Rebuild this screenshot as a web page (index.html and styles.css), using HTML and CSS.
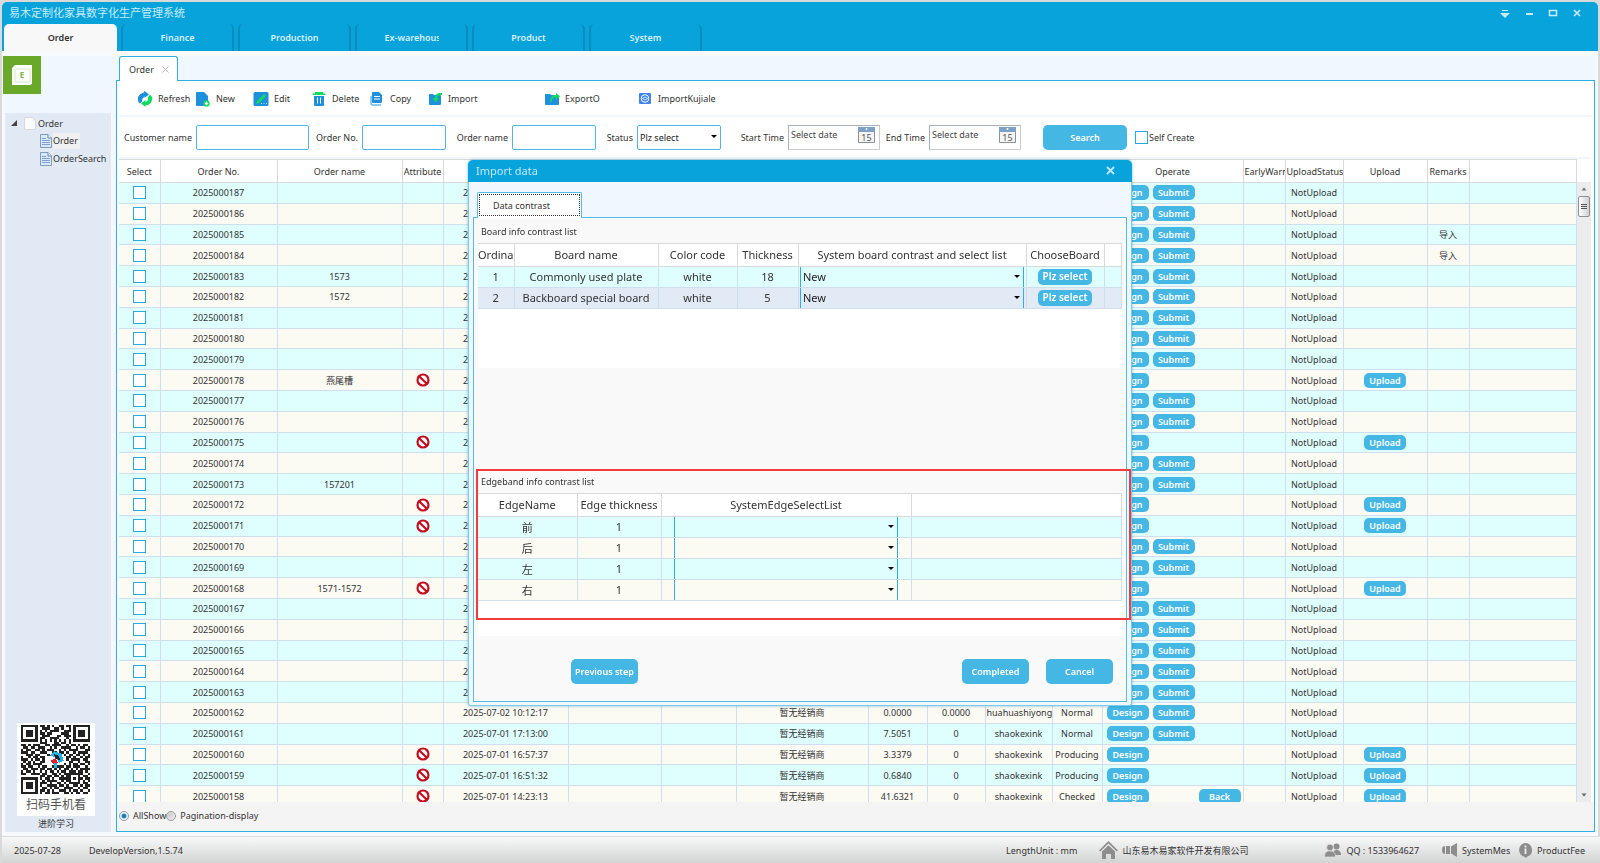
FILE: index.html
```html
<!DOCTYPE html>
<html lang="en">
<head>
  <meta charset="UTF-8" />
  <meta name="viewport" content="width=device-width, initial-scale=1.0"/>
  <title>易木定制化家具数字化生产管理系统</title>
  <link rel="stylesheet" href="styles.css">
</head>
<body>

<div class="app">
  <!-- Title bar -->
  <header class="titlebar">
    <div class="title-row">
      <h1 class="app-title">易木定制化家具数字化生产管理系统</h1>
      <div class="window-buttons">
        <button aria-label="Menu"><svg width="12" height="12" viewBox="0 0 12 12"><path d="M3 2h6v1H3zM1 5h10L6 10z" fill="#c5ecfb"/></svg></button>
        <button aria-label="Minimize"><svg width="12" height="12" viewBox="0 0 12 12"><path d="M3 6h7v2H3z" fill="#c5ecfb"/></svg></button>
        <button aria-label="Maximize"><svg width="12" height="12" viewBox="0 0 12 12"><path d="M2.5 3.5h7v5h-7z" fill="none" stroke="#c5ecfb" stroke-width="1.6"/></svg></button>
        <button aria-label="Close"><svg width="12" height="12" viewBox="0 0 12 12"><path d="M3 3l6 6M9 3l-6 6" stroke="#c5ecfb" stroke-width="1.7"/></svg></button>
      </div>
    </div>
    <nav class="main-nav">
      <a href="#" class="nav-tab active">Order</a>
      <a href="#" class="nav-tab">Finance</a>
      <a href="#" class="nav-tab">Production</a>
      <a href="#" class="nav-tab"><span class="nav-clip">Ex-warehouse</span></a>
      <a href="#" class="nav-tab">Product</a>
      <a href="#" class="nav-tab">System</a>
    </nav>
  </header>

  <div class="body">
    <!-- Sidebar -->
    <aside class="sidebar">
      <div class="module-head">
        <div class="module-icon">
          <svg width="38" height="38" viewBox="0 0 38 38"><path d="M12 9h17v19l-2 1H9V12z" fill="#fff"/><path d="M12 13h15v13H12z" fill="none" stroke="#d4e8bc" stroke-width="1"/></svg>
          <span class="module-letter">E</span>
        </div>
      </div>
      <div class="side-panel">
        <ul class="tree">
          <li class="tree-root">
            <svg class="tree-arrow" width="6" height="6" viewBox="0 0 6 6"><path d="M6 0v6H0z" fill="#444"/></svg>
            <svg width="12" height="13" viewBox="0 0 12 13"><path d="M.5.5h8l3 3v9H.5z" fill="#fbfbfb" stroke="#d5d9de"/><path d="M8.500.5v3h3" fill="#e6e6e6"/></svg>
            <span>Order</span>
          </li>
          <li class="tree-leaf selected"><svg width="12" height="14" viewBox="0 0 12 14"><path d="M.5.500h7.500l3.500 3.500v9.500H.5z" fill="#dbe8f6" stroke="#7d9dbd"/><path d="M8 .5V4h3.500" fill="#fff" stroke="#5e84a8"/><path d="M2 4.500h4M2 6.500h8M2 8.500h8M2 10.500h8" stroke="#7f9fd8"/></svg><a href="#">Order</a></li>
          <li class="tree-leaf"><svg width="12" height="14" viewBox="0 0 12 14"><path d="M.5.500h7.500l3.500 3.500v9.500H.5z" fill="#dbe8f6" stroke="#7d9dbd"/><path d="M8 .5V4h3.500" fill="#fff" stroke="#5e84a8"/><path d="M2 4.500h4M2 6.500h8M2 8.500h8M2 10.500h8" stroke="#7f9fd8"/></svg><a href="#">OrderSearch</a></li>
        </ul>
        <div class="qr-box">
          <svg id="qr" width="69" height="69" viewBox="0 0 29 29" shape-rendering="crispEdges"></svg>
          <p class="qr-text">扫码手机看</p>
        </div>
        <a href="#" class="learn-link">进阶学习</a>
      </div>
    </aside>

    <!-- Main content -->
    <main class="content">
      <div class="page-tabs">
        <div class="page-tab">Order
          <button aria-label="Close tab"><svg width="7" height="7" viewBox="0 0 7 7"><path d="M.5.5l6 6M6.500.5l-6 6" stroke="#b5b5b5"/></svg></button>
        </div>
      </div>

      <div class="panel">
        <div class="toolbar">
          <button class="tool">
            <svg width="16" height="16" viewBox="0 0 16 16"><path d="M8 0v2.500A3 3 0 0 1 8 5L5.500 7.500 5 10l-2 2.500A6 6 0 0 1 5 3z" fill="#1e90dd"/><path d="M7.500 0L12 3.500 7.500 7V5A3.200 3.200 0 0 0 5.200 9.500L3 12.500A6 6 0 0 1 7.500 2z" fill="#1e90dd"/><path d="M13 3.500a6 6 0 0 1-4.500 10.500v2L4 12.500 8.500 9v2A3.200 3.200 0 0 0 10.800 6.500z" fill="#0fdc5d"/></svg>
            <span>Refresh</span></button>
          <button class="tool">
            <svg width="16" height="16" viewBox="0 0 16 16"><path d="M1 2a1 1 0 0 1 1-1h7l4 4v5l-3 1-1 4H2a1 1 0 0 1-1-1z" fill="#1e90dd"/><circle cx="11.500" cy="12.500" r="3.200" fill="#0fdc5d"/><path d="M11.500 10.800v3.400M9.800 12.500h3.400" stroke="#fff" stroke-width="1.300"/></svg>
            <span>New</span></button>
          <button class="tool">
            <svg width="16" height="16" viewBox="0 0 16 16"><rect x=".5" y="1" width="15" height="14" rx="1.500" fill="#1e90dd"/><path d="M3 13l1-3 7-7 2 2-7 7z" fill="#0fdc5d"/><path d="M8 12.500h1M10.500 12.500h1M13 12.500h1" stroke="#b7dcf7"/></svg>
            <span>Edit</span></button>
          <button class="tool">
            <svg width="16" height="16" viewBox="0 0 16 16"><path d="M4 1h8v1.500h2.500V4h-13V2.500H4z" fill="#0fdc5d"/><path d="M3 5h10v9a1 1 0 0 1-1 1H4a1 1 0 0 1-1-1z" fill="#1e90dd"/><path d="M6.500 6.500v6M9.500 6.500v6" stroke="#fff"/></svg>
            <span>Delete</span></button>
          <button class="tool">
            <svg width="16" height="16" viewBox="0 0 16 16"><path d="M4 1h6l3 3v7a1 1 0 0 1-1 1H4a1 1 0 0 1-1-1V2a1 1 0 0 1 1-1z" fill="#1e90dd"/><path d="M2 5v7.500A1.500 1.500 0 0 0 3.500 14H12" fill="none" stroke="#6db9ee" stroke-width="1.500"/><path d="M5 5.500h6M5 8h6" stroke="#fff" stroke-width="1.200"/></svg>
            <span>Copy</span></button>
          <button class="tool tool-import">
            <svg width="16" height="16" viewBox="0 0 16 16"><path d="M2 3h4l1 1h6a1 1 0 0 1 1 1v8a1 1 0 0 1-1 1H3a1 1 0 0 1-1-1z" fill="#1e90dd"/><path d="M15 2c-5-.5-7 1.500-7 5H5.500L9 11.500 12 7h-2c0-2 1.500-3 5-3z" fill="#0fdc5d"/></svg>
            <span>Import</span></button>
          <button class="tool tool-export">
            <svg width="16" height="16" viewBox="0 0 16 16"><path d="M1 3h5l1 1h7a1 1 0 0 1 1 1v8a1 1 0 0 1-1 1H2a1 1 0 0 1-1-1z" fill="#1e90dd"/><path d="M6 11c0-5 2-7 6-7V2l4 3.500-4 3v-2c-3 0-4 1-4.500 4.500z" fill="#0fdc5d"/></svg>
            <span>ExportO</span></button>
          <button class="tool">
            <svg width="16" height="16" viewBox="0 0 16 16"><rect x="2" y="2" width="12" height="11" rx="1" fill="#3f83ee"/><circle cx="8" cy="7.500" r="3.800" fill="none" stroke="#fff"/><path d="M5.500 7.500L8 9l2.500-1.500L8 6z" fill="none" stroke="#fff" stroke-width=".8"/></svg>
            <span>ImportKujiale</span></button>
        </div>

        <form class="search-bar">
          <label class="lb lb-customer" for="customer">Customer name</label>
          <input type="text" id="customer" class="field field-wide" />
          <label class="lb lb-no" for="orderNo">Order No.</label>
          <input type="text" id="orderNo" class="field" />
          <label class="lb lb-name" for="orderName">Order name</label>
          <input type="text" id="orderName" class="field" />
          <label class="lb lb-status" for="status">Status</label>
          <span class="select-wrap">
            <select id="status" class="field"><option>Plz select</option></select>
          </span>
          <label class="lb lb-start" for="startTime">Start Time</label>
          <span class="date-field">
            <input type="text" id="startTime" placeholder="Select date" />
            <button type="button" aria-label="Pick start date"><svg width="17" height="16" viewBox="0 0 17 16"><path d="M.5.500h16v15H.5z" fill="#f5f5f5" stroke="#8b8f96"/><path d="M0 0h17v5H0z" fill="#7da0c4"/><circle cx="8.500" cy="2" r="1" fill="#fff"/></svg><span>15</span></button>
          </span>
          <label class="lb lb-end" for="endTime">End Time</label>
          <span class="date-field">
            <input type="text" id="endTime" placeholder="Select date" />
            <button type="button" aria-label="Pick end date"><svg width="17" height="16" viewBox="0 0 17 16"><path d="M.5.500h16v15H.5z" fill="#f5f5f5" stroke="#8b8f96"/><path d="M0 0h17v5H0z" fill="#7da0c4"/><circle cx="8.500" cy="2" r="1" fill="#fff"/></svg><span>15</span></button>
          </span>
          <button type="button" class="btn btn-search">Search</button>
          <label class="self-create"><input type="checkbox" class="check" /> Self Create</label>
        </form>

        <div class="table-area">
          <div class="table-scroll">
            <table class="grid orders">
              <colgroup>
                <col class="w41"><col class="w117"><col class="w125"><col class="w41"><col class="w125">
                <col class="w93"><col class="w75"><col class="w132"><col class="w59"><col class="w58">
                <col class="w67"><col class="w50"><col class="w141"><col class="w42"><col class="w58">
                <col class="w84"><col class="w42"><col>
              </colgroup>
              <thead>
                <tr>
                  <th>Select</th><th>Order No.</th><th>Order name</th><th>Attribute</th><th>Create time</th>
                  <th></th><th></th><th>Dealer</th><th>Area</th><th>Price</th>
                  <th>User</th><th>State</th><th>Operate</th><th class="tight">EarlyWarning</th><th class="tight">UploadStatus</th>
                  <th>Upload</th><th>Remarks</th><th></th>
                </tr>
              </thead>
              <tbody id="orderRows"></tbody>
            </table>
          </div>
          <div class="scrollbar">
            <svg width="14" height="14" viewBox="0 0 14 14"><path d="M4.500 8.500h5L7 5.500z" fill="#777"/></svg>
            <div class="thumb"></div>
            <svg class="scroll-down" width="14" height="14" viewBox="0 0 14 14"><path d="M4.500 5.500h5L7 8.500z" fill="#666"/></svg>
          </div>
        </div>

        <div class="paging">
          <label><input type="radio" name="paging" class="radio" checked />AllShow</label>
          <label><input type="radio" name="paging" class="radio" />Pagination-display</label>
        </div>
      </div>
    </main>
  </div>

  <!-- Status bar -->
  <footer class="statusbar">
    <span>2025-07-28</span>
    <span class="version">DevelopVersion,1.5.74</span>
    <span class="unit">LengthUnit : mm</span>
    <a href="#" class="foot-link company"><svg width="19" height="18" viewBox="0 0 19 18"><path d="M0 9.500L9.500 0 19 9.500l-1.300 1L9.500 2.500l-8.200 8z" fill="#8d8d8d"/><path d="M3 10.500l6.500-6.300 6.500 6.300V18h-4v-5H7v5H3z" fill="#8d8d8d"/></svg>山东易木易家软件开发有限公司</a>
    <span class="foot-link qq"><svg width="18" height="14" viewBox="0 0 18 14"><circle cx="12.500" cy="3.500" r="3" fill="#8d8d8d"/><path d="M9 12c0-4 1.500-5 3.500-5S17 8 17 12z" fill="#8d8d8d"/><circle cx="6" cy="4.500" r="3.300" fill="#8d8d8d" stroke="#e2e2e2" stroke-width=".7"/><path d="M.5 14c0-4.500 2-6 5.500-6s5.500 1.500 5.500 6z" fill="#8d8d8d" stroke="#e2e2e2" stroke-width=".7"/></svg>QQ : 1533964627</span>
    <a href="#" class="foot-link"><svg width="16" height="14" viewBox="0 0 16 14"><path d="M3 3v8a3 4 0 0 1 0-8zM4 3h4v8H4zM9 3.500L15 0v14l-6-3.500z" fill="#8d8d8d"/></svg><span class="foot-clip">SystemMes</span></a>
    <a href="#" class="foot-link"><svg width="15" height="15" viewBox="0 0 15 15"><path d="M7.500 0a7 7 0 0 1 2 13.500L7.500 15l-1-1.200A7 7 0 0 1 7.500 0z" fill="#8d8d8d"/><path d="M7.500 2.500v2M7.500 5.500v5.500" stroke="#eee" stroke-width="1.800"/></svg>ProductFee</a>
  </footer>
</div>

<!-- Import dialog -->
<div class="overlay">
  <section class="dialog" role="dialog" aria-labelledby="dialogTitle">
    <header class="dialog-head">
      <h2 id="dialogTitle">Import data</h2>
      <button aria-label="Close dialog"><svg width="9" height="9" viewBox="0 0 9 9"><path d="M1 1l7 7M8 1L1 8" stroke="#bfe8f8" stroke-width="1.800"/></svg></button>
    </header>
    <div class="dialog-body">
      <button class="dialog-tab">Data contrast</button>
      <div class="dialog-panel">
        <h3 class="list-title">Board info contrast list</h3>
        <div class="list-box board-box">
          <table class="grid list">
            <colgroup><col class="w36"><col class="w144"><col class="w79"><col class="w61"><col class="w228"><col class="w78"><col></colgroup>
            <thead>
              <tr><th class="tight">Ordinal</th><th>Board name</th><th>Color code</th><th>Thickness</th><th>System board contrast and select list</th><th>ChooseBoard</th><th></th></tr>
            </thead>
            <tbody>
              <tr><td>1</td><td>Commonly used plate</td><td>white</td><td>18</td>
                <td class="cell-select"><span class="select-wrap"><select aria-label="System board 1"><option>New</option></select></span></td>
                <td><button class="btn btn-cell btn-plz">Plz select</button></td><td></td></tr>
              <tr class="picked"><td>2</td><td>Backboard special board</td><td>white</td><td>5</td>
                <td class="cell-select"><span class="select-wrap"><select aria-label="System board 2"><option>New</option></select></span></td>
                <td><button class="btn btn-cell btn-plz">Plz select</button></td><td></td></tr>
            </tbody>
          </table>
        </div>

        <h3 class="list-title">Edgeband info contrast list</h3>
        <div class="list-box edge-box">
          <table class="grid list">
            <colgroup><col class="w99"><col class="w84"><col class="w250"><col></colgroup>
            <thead>
              <tr><th>EdgeName</th><th>Edge thickness</th><th>SystemEdgeSelectList</th><th></th></tr>
            </thead>
            <tbody>
              <tr><td>前</td><td>1</td><td class="cell-select"><span class="select-wrap"><select aria-label="前"><option></option></select></span></td><td></td></tr>
              <tr><td>后</td><td>1</td><td class="cell-select"><span class="select-wrap"><select aria-label="后"><option></option></select></span></td><td></td></tr>
              <tr><td>左</td><td>1</td><td class="cell-select"><span class="select-wrap"><select aria-label="左"><option></option></select></span></td><td></td></tr>
              <tr><td>右</td><td>1</td><td class="cell-select"><span class="select-wrap"><select aria-label="右"><option></option></select></span></td><td></td></tr>
            </tbody>
          </table>
        </div>

        <div class="dialog-actions">
          <button class="btn btn-prev">Previous step</button>
          <button class="btn">Completed</button>
          <button class="btn">Cancel</button>
        </div>
      </div>
    </div>
    <div class="highlight"></div>
  </section>
</div>

<script src="script.js"></script>
</body>
</html>
```
FILE: styles.css
```css
* {
  margin: 0;
  padding: 0;
  box-sizing: border-box;
}

body, html {
  height: 100%;
  overflow: hidden;
}

body, button, input, select {
  font-family: "Noto Sans", "Noto Sans CJK SC", sans-serif;
  font-size: 9px;
  color: #333;
}

body {
  background: #d9d9d9;
}

button {
  border: 0;
  background: none;
  cursor: pointer;
}

a {
  color: inherit;
  text-decoration: none;
}

svg {
  display: block;
  flex: none;
}

.app {
  height: 100vh;
  padding: 2px 2px 0;
  display: flex;
  flex-direction: column;
}

/* Title bar */
.titlebar {
  background: #09a3dc;
  border-radius: 5px 5px 0 0;
  padding: 0 3px 0 2px;
}

.title-row {
  height: 22px;
  display: flex;
  justify-content: space-between;
}

.app-title {
  font-size: 11px;
  font-weight: normal;
  line-height: 22px;
  padding-left: 5px;
  color: #c5ecfb;
}

.window-buttons {
  display: flex;
  gap: 12px;
  padding: 3px 12px 0 0;
  height: 18px;
}

.window-buttons button:first-child {
  padding-top: 3px;
}

.main-nav {
  display: flex;
  gap: 4px;
}

.nav-tab {
  width: 113px;
  height: 27px;
  line-height: 27px;
  text-align: center;
  font-weight: 600;
  color: #d8f1fb;
  border: solid #0b8cbe;
  border-width: 0 2px;
  border-radius: 5px 5px 0 0;
}

.nav-tab.active {
  background: #f8f8f8;
  color: #333;
  border-color: #f8f8f8;
}

.nav-clip {
  display: block;
  width: 54px;
  margin: 0 auto;
  overflow: hidden;
  white-space: nowrap;
}

/* Layout */
.body {
  flex: 1;
  min-height: 0;
  display: flex;
  background: #f8f9fa;
  padding: 5px 3px 4px;
}

.sidebar {
  width: 108px;
  display: flex;
  flex-direction: column;
}

.module-head {
  height: 57px;
  background: #f0f7ff;
}

.module-icon {
  position: relative;
  width: 38px;
  margin-left: -2px;
  background: #6aa829;
}

.module-letter {
  position: absolute;
  inset: 0;
  line-height: 37px;
  text-align: center;
  font-size: 8px;
  font-weight: bold;
  color: #7ab53c;
}

.side-panel {
  flex: 1;
  margin-right: 2px;
  padding-right: 4px;
  background: #e1e9f4;
  display: flex;
  flex-direction: column;
  align-items: center;
}

.tree {
  list-style: none;
  align-self: stretch;
  flex: 1;
  padding-top: 1px;
  white-space: nowrap;
}

.tree li {
  display: flex;
  align-items: center;
  height: 18px;
}

.tree-root {
  padding-left: 6px;
  gap: 2px;
}

.tree-arrow {
  margin-right: 5px;
}

.tree-leaf {
  padding-left: 35px;
  gap: 1px;
}

.tree-leaf a {
  line-height: 16px;
  padding-right: 2px;
}

.selected a {
  background: #f0f0f0;
}

.qr-box {
  width: 78px;
  padding: 2px 4px 0;
  background: #fff;
}

.qr-text {
  font-size: 12px;
  line-height: 22px;
  text-align: center;
  color: #555;
}

.learn-link {
  line-height: 16px;
}

.content {
  flex: 1;
  min-width: 0;
  padding-left: 3px;
  display: flex;
  flex-direction: column;
  background: #f0f7ff;
}

.page-tabs {
  display: flex;
  padding-left: 3px;
}

.page-tab {
  width: 59px;
  height: 25px;
  padding: 0 8px 0 9px;
  display: flex;
  align-items: center;
  justify-content: space-between;
  background: #fff;
  border: 1px solid #2db0e3;
  border-bottom: 0;
  border-radius: 3px 3px 0 0;
  margin-bottom: -1px;
  position: relative;
}

.panel {
  flex: 1;
  min-height: 0;
  display: flex;
  flex-direction: column;
  background: #fff;
  border: 1px solid #2db0e3;
  padding: 0 3px 0 2px;
}

.toolbar {
  display: flex;
  height: 36px;
  padding: 1px 0 0 18px;
  border-bottom: 2px solid #f0f7ff;
}

.tool {
  width: 58px;
  display: flex;
  align-items: center;
  gap: 5px;
}

.tool-import {
  width: 117px;
}

.tool-export {
  width: 93px;
}

/* Search bar */
.search-bar {
  display: flex;
  align-items: center;
  height: 42px;
  border-bottom: 2px solid #f0f7ff;
}

.lb {
  text-align: right;
  padding-right: 4px;
  white-space: nowrap;
}

.lb-customer { width: 77px; }
.lb-no { width: 53px; }
.lb-name { width: 66px; }
.lb-status { width: 41px; }
.lb-start { width: 67px; }
.lb-end { width: 49px; }

.field {
  width: 84px;
  height: 25px;
  background: #fff;
  border: 1px solid #4bb9e2;
  border-radius: 2px;
  padding: 0 2px;
}

.field-wide {
  width: 113px;
}

select {
  appearance: none;
  color: #222;
}

.select-wrap {
  position: relative;
  display: inline-block;
}

.select-wrap::after {
  content: '';
  position: absolute;
  right: 4px;
  top: 50%;
  margin-top: -2px;
  border: 3px solid transparent;
  border-top: 3px solid #000;
  border-bottom: 0;
  pointer-events: none;
}

.date-field {
  display: flex;
  width: 92px;
  height: 25px;
  border: 1px solid #a9b1bb;
  border-right-color: #ccc;
  border-bottom-color: #ccc;
}

.date-field input {
  flex: 1;
  min-width: 0;
  border: 0;
  padding: 0 0 5px 2px;
}

.date-field input::placeholder {
  color: #444;
}

.date-field button {
  position: relative;
  width: 17px;
  height: 16px;
  margin: 1px 4px 0 0;
}

.date-field button span {
  position: absolute;
  inset: 5px 0 0;
  line-height: 11px;
  text-align: center;
  color: #555;
}

.btn {
  width: 67px;
  height: 25px;
  background: #45b7e4;
  border-radius: 5px;
  color: #fff;
  font-weight: 600;
  white-space: nowrap;
}

.btn-search {
  width: 84px;
  margin-left: 22px;
}

.self-create {
  display: flex;
  align-items: center;
  gap: 1px;
  margin-left: 8px;
}

.check {
  appearance: none;
  width: 13px;
  height: 13px;
  border: 1px solid #2ba9dd;
  background: #fff;
}

/* Tables */
.grid {
  width: 100%;
  table-layout: fixed;
  border-collapse: collapse;
}

.grid th, .grid td {
  text-align: center;
  font-weight: normal;
  white-space: nowrap;
  overflow: hidden;
}

.grid th {
  height: 23px;
  background: #fff;
  border: 1px solid #d9d9d9;
  border-left: 0;
}

.grid td {
  height: 20px;
  border: 1px solid #cfdff0;
  border-left: 0;
}

.grid tbody tr {
  background: #fbfaf3;
}

.grid tbody tr:nth-child(odd) {
  background: #dfffff;
}

.grid .tight {
  text-align: left;
}

.w36 { width: 36px; }
.w41 { width: 41px; }
.w42 { width: 42px; }
.w50 { width: 50px; }
.w58 { width: 58px; }
.w59 { width: 59px; }
.w61 { width: 61px; }
.w67 { width: 67px; }
.w75 { width: 75px; }
.w78 { width: 78px; }
.w79 { width: 79px; }
.w84 { width: 84px; }
.w93 { width: 93px; }
.w99 { width: 99px; }
.w117 { width: 117px; }
.w125 { width: 125px; }
.w132 { width: 132px; }
.w141 { width: 141px; }
.w144 { width: 144px; }
.w228 { width: 228px; }
.w250 { width: 250px; }

.table-area {
  flex: 1;
  min-height: 0;
  display: flex;
}

.table-scroll {
  flex: 1;
  min-width: 0;
  overflow: hidden;
}

.orders {
  height: 648px;
}

.orders .check {
  display: block;
  margin: 0 auto;
}

.orders .tight {
  padding-left: 1px;
}

.ban {
  margin: 0 auto;
}

.ops {
  display: grid;
  grid-template-columns: repeat(3, 42px);
  gap: 4px;
  padding-left: 4px;
}

.btn-cell {
  width: 42px;
  height: 15px;
  line-height: 15px;
}

.ops .btn-back {
  grid-column: 3;
}

.scrollbar {
  width: 14px;
  margin-top: 23px;
  background: #ececec;
  display: flex;
  flex-direction: column;
}

.thumb {
  width: 12px;
  height: 21px;
  margin: 0 1px;
  border: 1px solid #8f8f8f;
  border-radius: 2px;
  background: linear-gradient(#555, #555) center 7px / 6px 1px no-repeat,
    linear-gradient(#555, #555) center 9px / 6px 1px no-repeat,
    linear-gradient(#555, #555) center 11px / 6px 1px no-repeat,
    linear-gradient(90deg, #fff, #cfcfd4);
}

.scroll-down {
  margin-top: auto;
}

.paging {
  height: 29px;
  margin: 0 -3px 0 -2px;
  padding-bottom: 2px;
  background: #f4f4f4;
  display: flex;
}

.paging label {
  display: flex;
  align-items: center;
  gap: 4px;
  padding-left: 2px;
}

.paging label + label {
  padding-left: 0;
}

.radio {
  appearance: none;
  width: 10px;
  height: 10px;
  border: 1px solid #999;
  border-radius: 50%;
  background: radial-gradient(circle at 35% 35%, #ccc, #f6f6f6);
}

.radio:checked {
  background: radial-gradient(circle, #1b7fb5 0 35%, #e8f2f8 50%);
}

/* Status bar */
.statusbar {
  height: 27px;
  display: flex;
  align-items: center;
  margin-right: -2px;
  padding: 0 15px 0 12px;
  border-top: 1px solid #dcdcdc;
  background: linear-gradient(#f8f8f8, #d2d4d3);
}

.version {
  margin-left: 28px;
}

.unit {
  margin-left: auto;
}

.foot-link {
  display: flex;
  align-items: center;
  gap: 4px;
}

.company {
  margin: 0 76px 0 22px;
}

.qq {
  margin-right: 23px;
}

.foot-clip {
  width: 56px;
}

/* Import dialog */
.overlay {
  position: fixed;
  inset: 0;
  padding-top: 2px;
  display: flex;
  align-items: center;
  justify-content: center;
}

.dialog {
  position: relative;
  width: 664px;
  background: #f0f7ff;
  border: 1px solid #7ccbea;
  border-top: 0;
  border-radius: 5px 5px 3px 3px;
  box-shadow: 0 0 3px rgba(0, 120, 170, 0.5);
}

.dialog-head {
  height: 22px;
  margin: 0 -1px;
  padding: 0 17px 0 8px;
  display: flex;
  align-items: center;
  justify-content: space-between;
  background: #09a3dc;
  border-radius: 5px 5px 0 0;
}

.dialog-head h2 {
  font-size: 11px;
  font-weight: normal;
  color: #bfe8f8;
}

.dialog-body {
  padding: 10px 4px 3px;
}

.dialog-tab {
  display: block;
  position: relative;
  width: 105px;
  height: 26px;
  margin: 0 0 -1px 4px;
  padding-right: 16px;
  background: #fff;
  border: 1px solid #52bce4;
  border-bottom: 0;
  border-radius: 2px 2px 0 0;
  outline: 1px dotted #333;
  outline-offset: -3px;
}

.dialog-panel {
  padding: 0 4px;
  background: #f9f9f9;
  border: 1px solid #52bce4;
}

.list-title {
  font-size: 9px;
  font-weight: normal;
  line-height: 23px;
  padding: 2px 0 0 3px;
}

.list-box {
  background: #fff;
}

.board-box {
  height: 125px;
  margin-bottom: 100px;
}

.edge-box {
  height: 143px;
}

.list th, .list td, .list select {
  font-size: 11px;
}

.list .picked:nth-child(even) {
  background: #e1eaf5;
}

.cell-select .select-wrap {
  display: block;
  width: 224px;
  margin: 0 auto;
}

.cell-select select {
  display: block;
  width: 100%;
  height: 20px;
  padding-left: 2px;
  background: transparent;
  border: solid #2db0e3;
  border-width: 0 1px;
}

.btn-plz {
  width: 54px;
  height: 16px;
  font-size: 10px;
}

.dialog-actions {
  display: flex;
  gap: 17px;
  padding: 23px 9px 17px 93px;
}

.btn-prev {
  margin-right: auto;
}

/* Red frame round the edgeband list */
.highlight {
  position: absolute;
  top: 309px;
  left: 7px;
  right: 0;
  height: 151px;
  border: 2px solid #f53a3c;
  pointer-events: none;
}
```
FILE: script.js
```js
// [order no, order name, create time, area, price, user, state, buttons, remark]
const DEALER = '暂无经销商';
const orders = [
  ['2025000187', '', '2025-07-25 15:20:11', '0.0000', '0', 'shaokexink', 'Normal', 'S', ''],
  ['2025000186', '', '2025-07-25 14:02:37', '0.0000', '0', 'shaokexink', 'Normal', 'S', ''],
  ['2025000185', '', '2025-07-24 16:41:05', '0.0000', '0', 'shaokexink', 'Normal', 'S', '导入'],
  ['2025000184', '', '2025-07-24 16:38:52', '0.0000', '0', 'shaokexink', 'Normal', 'S', '导入'],
  ['2025000183', '1573', '2025-07-23 10:15:44', '0.0000', '0', 'shaokexink', 'Normal', 'S', ''],
  ['2025000182', '1572', '2025-07-23 09:50:18', '0.0000', '0', 'shaokexink', 'Normal', 'S', ''],
  ['2025000181', '', '2025-07-22 17:22:09', '0.0000', '0', 'shaokexink', 'Normal', 'S', ''],
  ['2025000180', '', '2025-07-22 11:08:30', '0.0000', '0', 'shaokexink', 'Normal', 'S', ''],
  ['2025000179', '', '2025-07-21 15:47:21', '0.0000', '0', 'shaokexink', 'Normal', 'S', ''],
  ['2025000178', '燕尾槽', '2025-07-18 14:33:56', '0.0000', '0', 'shaokexink', 'Producing', 'U', ''],
  ['2025000177', '', '2025-07-17 16:12:40', '0.0000', '0', 'shaokexink', 'Normal', 'S', ''],
  ['2025000176', '', '2025-07-17 10:05:13', '0.0000', '0', 'shaokexink', 'Normal', 'S', ''],
  ['2025000175', '', '2025-07-16 15:29:48', '0.0000', '0', 'shaokexink', 'Producing', 'U', ''],
  ['2025000174', '', '2025-07-15 13:54:02', '0.0000', '0', 'shaokexink', 'Normal', 'S', ''],
  ['2025000173', '157201', '2025-07-14 17:10:35', '0.0000', '0', 'shaokexink', 'Normal', 'S', ''],
  ['2025000172', '', '2025-07-12 11:36:27', '0.0000', '0', 'shaokexink', 'Producing', 'U', ''],
  ['2025000171', '', '2025-07-11 16:45:59', '0.0000', '0', 'shaokexink', 'Producing', 'U', ''],
  ['2025000170', '', '2025-07-10 14:21:06', '0.0000', '0', 'shaokexink', 'Normal', 'S', ''],
  ['2025000169', '', '2025-07-09 10:48:53', '0.0000', '0', 'shaokexink', 'Normal', 'S', ''],
  ['2025000168', '1571-1572', '2025-07-08 15:03:17', '0.0000', '0', 'shaokexink', 'Producing', 'U', ''],
  ['2025000167', '', '2025-07-07 17:31:42', '0.0000', '0', 'shaokexink', 'Normal', 'S', ''],
  ['2025000166', '', '2025-07-05 13:26:34', '0.0000', '0', 'shaokexink', 'Normal', 'S', ''],
  ['2025000165', '', '2025-07-04 16:57:20', '0.0000', '0', 'shaokexink', 'Normal', 'S', ''],
  ['2025000164', '', '2025-07-03 14:40:08', '0.0000', '0', 'shaokexink', 'Normal', 'S', ''],
  ['2025000163', '', '2025-07-02 15:18:45', '0.0000', '0', 'shaokexink', 'Normal', 'S', ''],
  ['2025000162', '', '2025-07-02 10:12:17', '0.0000', '0.0000', 'huahuashiyong', 'Normal', 'S', ''],
  ['2025000161', '', '2025-07-01 17:13:00', '7.5051', '0', 'shaokexink', 'Normal', 'S', ''],
  ['2025000160', '', '2025-07-01 16:57:37', '3.3379', '0', 'shaokexink', 'Producing', 'U', ''],
  ['2025000159', '', '2025-07-01 16:51:32', '0.6840', '0', 'shaokexink', 'Producing', 'U', ''],
  ['2025000158', '', '2025-07-01 14:23:13', '41.6321', '0', 'shaokexink', 'Checked', 'UB', '']
];

const banIcon = '<svg class="ban" width="14" height="14" viewBox="0 0 14 14"><circle cx="7" cy="7" r="5.500" fill="#fff" stroke="#c40d1e" stroke-width="2.200"/><path d="M3.200 3.200l7.600 7.600" stroke="#c40d1e" stroke-width="2.200"/></svg>';

function cellButton(text, extra) {
  return `<button class="btn btn-cell ${extra || ''}">${text}</button>`;
}

document.getElementById('orderRows').innerHTML = orders.map(o => {
  const [no, name, time, area, price, user, state, flags, remark] = o;
  const locked = flags.includes('U');
  let ops = cellButton('Design');
  if (flags.includes('S')) ops += cellButton('Submit');
  if (flags.includes('B')) ops += cellButton('Back', 'btn-back');
  return `<tr>
    <td><input type="checkbox" class="check" aria-label="${no}"></td>
    <td>${no}</td><td>${name}</td><td>${locked ? banIcon : ''}</td><td>${time}</td>
    <td></td><td></td><td>${DEALER}</td><td>${area}</td><td>${price}</td>
    <td class="${user.length > 11 ? 'tight' : ''}">${user}</td><td>${state}</td>
    <td><div class="ops">${ops}</div></td><td></td><td>NotUpload</td>
    <td>${locked ? cellButton('Upload') : ''}</td><td>${remark}</td><td></td>
  </tr>`;
}).join('');

// QR code, one string per module row
const qrRows = [
  '11111110110101001101101111111',
  '10000010011100110100101000001',
  '10111010101011110011101011101',
  '10111010110110000111001011101',
  '10111010011100011011101011101',
  '10000010110011110001001000001',
  '11111110101010101010101111111',
  '00000000111000110110100000000',
  '11010111001101111001011010110',
  '01101101110010100111100101101',
  '10110011010111001010111100011',
  '11101100111001101101001011110',
  '00111011000100000010110110101',
  '10010110110000000001101001011',
  '11101011010000000001011110110',
  '01010100110000000000110010011',
  '10110111100000000010101101101',
  '11011001011001011101101110010',
  '01101110110110101011010101111',
  '10110100101011010110111011010',
  '11001111011001101011111111001',
  '00000000110110110101100010110',
  '11111110101101001111101011011',
  '10000010010111100101100010101',
  '10111010111010011010111110110',
  '10111010100111101101001101011',
  '10111010011010110011110010110',
  '10000010110101001110101101001',
  '11111110101101110011010110110'
];
let d = '';
qrRows.forEach((row, y) => {
  [...row].forEach((bit, x) => {
    if (bit === '1') d += `M${x} ${y}h1v1h-1z`;
  });
});
document.getElementById('qr').innerHTML = `<path d="${d}" fill="#222"/>
  <path d="M12 13l2-2 3 1 1 3-2 1-1-2-2-1z" fill="#25b3e6"/><path d="M13.500 12l2.500 1 .5 2-2-1z" fill="#222"/>
  <path d="M12.500 15l2-1 1 2-1.500 1z" fill="#e8202c"/><path d="M14 16h1v2h-1z" fill="#25b3e6"/>`;
```
